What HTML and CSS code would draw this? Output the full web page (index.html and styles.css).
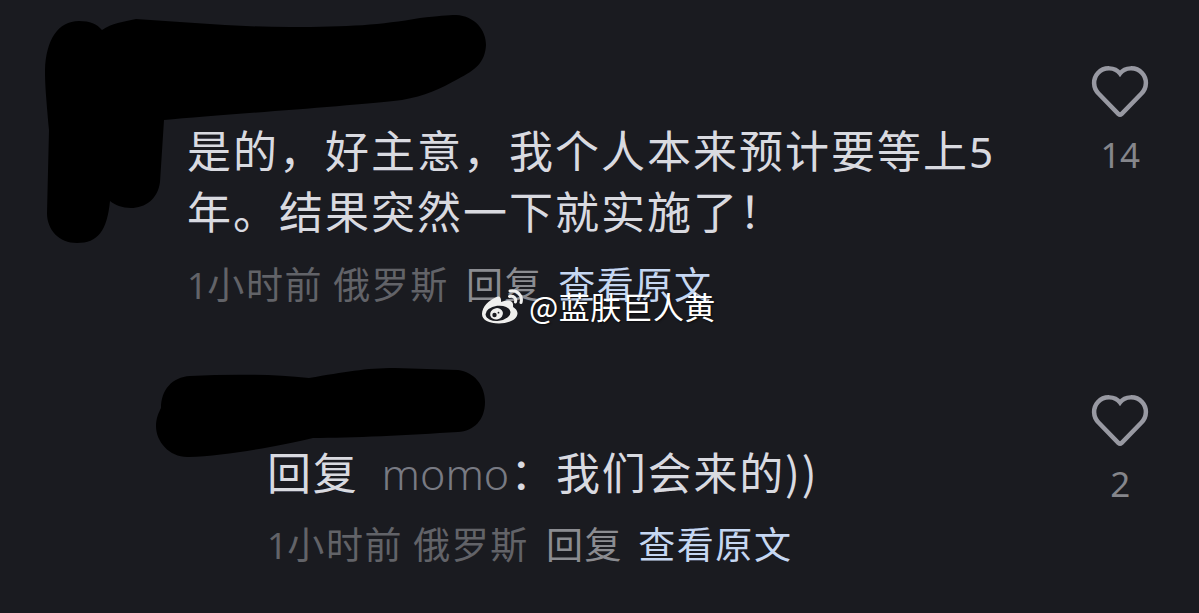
FILE: index.html
```
<!DOCTYPE html>
<html lang="zh-CN">
<head>
    <meta charset="UTF-8">
    <meta name="viewport" content="width=device-width, initial-scale=1.0">
    <title>评论</title>
    <link rel="stylesheet" href="styles.css">
</head>
<body>
    <div class="comments">
        <!-- 主评论 -->
        <div class="comment">
            <div class="comment-body">
                <p class="comment-text">是的，好主意，我个人本来预计要等上<span class="latin">5</span><br>年。结果突然一下就实施了！</p>
                <div class="meta">
                    <span class="time"><span class="latin">1</span>小时前</span>
                    <span class="place">俄罗斯</span>
                    <span class="reply-btn">回复</span>
                    <span class="origin">查看原文</span>
                </div>
            </div>
            <div class="like">
                <svg class="heart" viewBox="0 0 60 54" width="60" height="54">
                    <path d="M30 9.500C25 3 14 2.500 8 9C2.500 15 3 24 8.500 29.500L28.500 50Q30 51.300 31.500 50L51.500 29.500C57 24 57.500 15 52 9C46 2.500 35 3 30 9.500Z"/>
                </svg>
                <span class="like-count">14</span>
            </div>
        </div>

        <!-- 回复 -->
        <div class="comment comment-reply">
            <div class="comment-body">
                <p class="comment-text">回复<span class="user">momo</span>：我们会来的))</p>
                <div class="meta">
                    <span class="time"><span class="latin">1</span>小时前</span>
                    <span class="place">俄罗斯</span>
                    <span class="reply-btn">回复</span>
                    <span class="origin">查看原文</span>
                </div>
            </div>
            <div class="like">
                <svg class="heart" viewBox="0 0 60 54" width="60" height="54">
                    <path d="M30 9.500C25 3 14 2.500 8 9C2.500 15 3 24 8.500 29.500L28.500 50Q30 51.300 31.500 50L51.500 29.500C57 24 57.500 15 52 9C46 2.500 35 3 30 9.500Z"/>
                </svg>
                <span class="like-count">2</span>
            </div>
        </div>

        <!-- 涂抹 -->
        <svg class="scribble" viewBox="0 0 1199 613" width="1199" height="613">
            <path d="M79 21C90 21 97 24 102 30C112 23 123 22 136 19C185 22 235 27 290 27C350 27 380 25 420 18C438 16 448 15 456 15C475 16 486 30 486 45C485 63 475 70 458 79C440 89 425 96 402 100C350 106 220 115 164 120L160 182C158 199 145 208 131 208C122 208 115 205 110 201C107 231 98 243 77 243C59 243 47 230 47 213L49 130C46 95 45 85 45 70C46 40 58 21 79 21Z"/>
            <path d="M190 376C230 374 270 374 309 378C345 372 365 368 395 368L458 370C474 372 485 385 485 402C485 420 474 431 458 432C410 435 350 438 313 438C280 446 225 456 189 457C170 458 156 442 156 426C156 418 159 412 161 408C161 390 172 377 190 376Z"/>
        </svg>

        <!-- 水印 -->
        <div class="watermark">
            <svg class="weibo" viewBox="0 0 44 38" width="44" height="38">
                <path class="weibo-face" d="M15.500 9.500C19.500 7 21.500 9.500 21 14C26 11.500 34 11.500 33 18C32.700 20 37.500 20.500 37.500 25.500C37 32 28 35.500 19 35.500C9 35.500 2 32 2 26C2 19 9 12 15.500 9.500Z"/>
                <ellipse class="weibo-eye" cx="18" cy="25.300" rx="12.500" ry="7.500" transform="rotate(-7 18 25.300)"/>
                <ellipse class="weibo-face" cx="16.500" cy="25.800" rx="6.500" ry="5.600" transform="rotate(-15 16.500 25.800)"/>
                <circle class="weibo-eye" cx="14.500" cy="27" r="2.200"/>
                <circle class="weibo-eye" cx="18.500" cy="24.700" r="0.900"/>
                <path class="weibo-wave" d="M30 3C37 1.500 43 7.500 41 14.500M29.500 8.500C33.500 7.500 36.500 10 35.500 14"/>
            </svg>
            <span>@蓝肤巨人黄</span>
        </div>
    </div>
</body>
</html>
```
FILE: styles.css
```
* {
    margin: 0;
    padding: 0;
    box-sizing: border-box;
}

body {
    font-family: "Noto Sans CJK SC", sans-serif;
    background: #1a1b20;
    color: #d9dae0;
}

.comments {
    position: relative;
    width: 1199px;
    height: 613px;
    overflow: hidden;
}

.comment {
    display: flex;
    justify-content: space-between;
    height: 329px;
    padding: 119px 39px 0 187px;
}

.comment-reply {
    height: 284px;
    padding-top: 112px;
    padding-left: 267px;
}

.comment-text {
    font-size: 44px;
    line-height: 61px;
    letter-spacing: 2px;
    white-space: nowrap;
}

.latin {
    font-family: "Noto Sans", sans-serif;
    font-size: 0.96em;
    line-height: 1;
    letter-spacing: 0;
}

.user {
    margin: 0 1px 0 23px;
    font-family: "Noto Sans", sans-serif;
    font-size: 43px;
    font-weight: 300;
    line-height: 1;
    letter-spacing: 0;
    color: #787a83;
}

.comment-reply .comment-text {
    letter-spacing: 1.8px;
}

.meta {
    display: flex;
    margin-top: 16px;
    font-size: 37px;
    line-height: 52px;
    letter-spacing: 1.6px;
    white-space: nowrap;
    color: #626368;
}

.comment-reply .meta {
    margin-top: 15px;
}

.place {
    margin-left: 10px;
}

.reply-btn {
    margin-left: 17px;
    color: #8b8c91;
}

.origin {
    margin-left: 15px;
    color: #c6d7f2;
}

.like {
    display: flex;
    flex-direction: column;
    align-items: center;
    width: 80px;
    margin-top: -55px;
}

.comment-reply .like {
    margin-top: -48px;
}

.heart {
    fill: none;
    stroke: #9899a2;
    stroke-width: 4.5;
}

.like-count {
    margin-top: 13px;
    font-family: "Noto Sans", sans-serif;
    font-size: 35px;
    line-height: 48px;
    letter-spacing: -0.5px;
    color: #85868b;
}

.scribble {
    position: absolute;
    top: 0;
    left: 0;
    fill: #000;
}

.watermark {
    position: absolute;
    top: 286px;
    left: 480px;
    display: flex;
    align-items: center;
    font-size: 31px;
    line-height: 38px;
    letter-spacing: 0.4px;
    white-space: nowrap;
    color: #fff;
    text-shadow: 1px 1px 2px rgba(0, 0, 0, 0.6);
}

.watermark span {
    margin-left: 5px;
}

.weibo {
    margin-top: 2px;
}

.weibo-face {
    fill: #f0f0ee;
}

.weibo-eye {
    fill: #1a1b20;
}

.weibo-wave {
    fill: none;
    stroke: #f0f0ee;
    stroke-width: 3;
    stroke-linecap: round;
}
```
